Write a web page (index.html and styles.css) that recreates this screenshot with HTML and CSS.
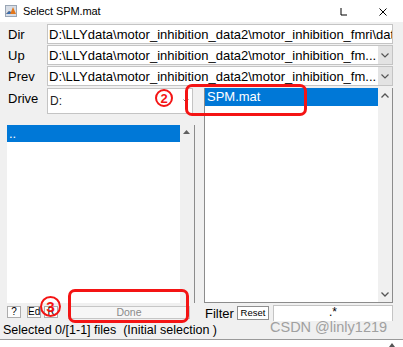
FILE: index.html
```html
<!DOCTYPE html>
<html>
<head>
<meta charset="utf-8">
<link rel="stylesheet" href="styles.css">
</head>
<body>
<div class="titlebar">
  <svg class="app-icon" viewBox="0 0 12 12" width="12" height="12">
    <rect x="0.5" y="0.5" width="11" height="11" fill="#d7dde6" stroke="#9aa6b5"/>
    <path d="M1 9 L4 6 L6 7 L8 2 L11 9 Z" fill="#e2761a"/>
    <path d="M1 9 L4 6 L6 7 L5 9 Z" fill="#3a6fb0"/>
  </svg>
  <span class="title">Select SPM.mat</span>
  <svg class="ctl-min" viewBox="0 0 8 8" width="8" height="8"><path d="M1 0 V7 H7" fill="none" stroke="#000" stroke-width="1"/></svg>
  <svg class="ctl-close" viewBox="0 0 8 8" width="8" height="8"><path d="M0.5 0.5 L7.5 7.5 M7.5 0.5 L0.5 7.5" fill="none" stroke="#000" stroke-width="1"/></svg>
</div>

<div class="main">
  <div class="paths">
    <div class="row">
      <span class="lbl">Dir</span>
      <div class="field"><span class="ftext">D:\LLYdata\motor_inhibition_data2\motor_inhibition_fmri\dat</span></div>
    </div>
    <div class="row">
      <span class="lbl">Up</span>
      <div class="field combo"><span class="ftext">D:\LLYdata\motor_inhibition_data2\motor_inhibition_fm...</span>
        <span class="drop"><svg viewBox="0 0 8 5" width="8" height="5"><path d="M0.5 0.5 L4 4 L7.5 0.5" fill="none" stroke="#555" stroke-width="1.2"/></svg></span>
      </div>
    </div>
    <div class="row">
      <span class="lbl">Prev</span>
      <div class="field combo"><span class="ftext">D:\LLYdata\motor_inhibition_data2\motor_inhibition_fm...</span>
        <span class="drop"><svg viewBox="0 0 8 5" width="8" height="5"><path d="M0.5 0.5 L4 4 L7.5 0.5" fill="none" stroke="#555" stroke-width="1.2"/></svg></span>
      </div>
    </div>
  </div>

  <div class="lower">
    <div class="left-col">
      <div class="drive-row">
        <span class="lbl">Drive</span>
        <div class="drive">
          <span class="dtext">D:</span>
          <svg class="darrow" viewBox="0 0 6 4" width="6" height="4"><path d="M0.5 0.5 L3 3 L5.5 0.5" fill="none" stroke="#777" stroke-width="1"/></svg>
        </div>
      </div>
      <div class="list left-list">
        <div class="items">
          <div class="item sel">..</div>
        </div>
        <div class="sbar">
          <svg class="up" viewBox="0 0 7 4" width="7" height="4"><path d="M0 4 L3.5 0 L7 4 Z" fill="#606060"/></svg>
        </div>
      </div>
      <div class="btn-row">
        <span class="btn b-q">?</span>
        <span class="btn b-ed">Ed</span>
        <span class="btn b-r">R</span>
        <span class="btn done">Done</span>
      </div>
    </div>

    <div class="right-col">
      <div class="list right-list">
        <div class="items">
          <div class="item sel tall">SPM.mat</div>
        </div>
        <div class="sbar">
          <svg class="up" viewBox="0 0 8 5" width="8" height="5"><path d="M0.5 4.5 L4 1 L7.5 4.5" fill="none" stroke="#555" stroke-width="1.3"/></svg>
          <svg class="down" viewBox="0 0 8 5" width="8" height="5"><path d="M0.5 0.5 L4 4 L7.5 0.5" fill="none" stroke="#555" stroke-width="1.3"/></svg>
        </div>
      </div>
      <div class="filter-row">
        <span class="flbl">Filter</span>
        <span class="btn reset">Reset</span>
        <div class="fedit">.*</div>
      </div>
    </div>
  </div>
</div>

<div class="status">Selected 0/[1-1] files  (Initial selection )</div>
<div class="footer">
  <svg class="fup" viewBox="0 0 6 4" width="6" height="4"><path d="M0 4 L3 0 L6 4 Z" fill="#555"/></svg>
</div>

<div class="watermark">CSDN @linly1219</div>
<div class="anno box1"></div>
<div class="anno box2"></div>
<div class="anno circ c2">2</div>
<div class="anno circ c3">3</div>
</body>
</html>
```

FILE: styles.css
```css
* { box-sizing: border-box; margin: 0; padding: 0; }
html, body { width: 403px; height: 347px; overflow: hidden; }
body {
  background: #f0f0f0;
  font-family: "Liberation Sans", Arial, sans-serif;
  color: #000;
  position: relative;
}

.titlebar {
  height: 22px;
  background: #fff;
  display: flex;
  align-items: center;
  padding-left: 5px;
}
.app-icon { margin-right: 6px; }
.title { font-size: 11px; flex: 1; letter-spacing: -0.1px; }
.ctl-min { margin-right: 31px; margin-top: 1px; }
.ctl-close { margin-right: 16px; margin-top: 1px; }

.main { padding: 2px 10px 0 7px; }

.paths { display: flex; flex-direction: column; gap: 1px; }
.row {
  display: grid;
  grid-template-columns: 40px 1fr;
  height: 20px;
  align-items: center;
}
.lbl { font-size: 13px; padding-left: 1px; }

.field {
  height: 20px;
  background: #fff;
  border: 1px solid #c4c4c4;
  display: flex;
  align-items: center;
  overflow: hidden;
}
.ftext {
  font-size: 13px;
  white-space: nowrap;
  padding-left: 1px;
  flex: 1;
  overflow: hidden;
}
.drop {
  width: 14px;
  height: 100%;
  background: #e3e3e3;
  display: flex;
  align-items: center;
  justify-content: center;
}

.lower { display: flex; gap: 9px; margin-top: 2px; }
.left-col { width: 188px; display: flex; flex-direction: column; }
.right-col { width: 189px; display: flex; flex-direction: column; }

.drive-row {
  display: grid;
  grid-template-columns: 40px 146px;
  height: 26px;
  align-items: start;
}
.drive-row .lbl { padding-top: 3px; }
.drive {
  height: 26px;
  background: #fff;
  border: 1px solid #c4c4c4;
  display: flex;
  align-items: center;
  padding: 0 3px 0 2px;
}
.dtext { font-size: 12px; flex: 1; color: #222; }

.list { display: flex; }
.left-list { height: 178px; margin-top: 11px; }
.right-list {
  height: 215px;
  border-left: 1px solid #8c8c8c;
  border-bottom: 1px solid #8c8c8c;
  border-right: 1px solid #8c8c8c;
}
.items { flex: 1; background: #fff; }
.item {
  height: 17px;
  font-size: 13px;
  line-height: 18px;
  padding-left: 2px;
  white-space: nowrap;
}
.item.tall { height: 18px; line-height: 18px; }
.sel { background: #0078d7; color: #fff; }

.sbar {
  width: 14px;
  background: #f0f0f0;
  display: flex;
  flex-direction: column;
  align-items: center;
  justify-content: space-between;
  padding: 5px 0 5px;
}
.left-list .sbar { width: 15px; border-right: 1px solid #8c8c8c; padding-top: 5px; }
.left-list .sbar .up { margin-right: 1px; }

.btn-row {
  display: flex;
  align-items: center;
  height: 14px;
  margin-top: 2px;
}
.btn {
  height: 12px;
  border: 1px solid #adadad;
  background: #fdfdfd;
  font-size: 10px;
  line-height: 10px;
  text-align: center;
  display: inline-block;
}
.b-q { width: 14px; }
.b-ed { width: 14px; margin-left: 6px; }
.b-r { width: 14px; margin-left: 3px; }
.done {
  width: 122px;
  height: 13px;
  margin-left: 10px;
  background: #f6f6f6;
  border-color: #c6c6c6;
  color: #8a8a8a;
  font-size: 10.5px;
  line-height: 11px;
}

.filter-row {
  display: flex;
  align-items: center;
  height: 16px;
  margin-top: 2px;
}
.flbl { font-size: 13px; width: 33px; padding-left: 1px; }
.reset {
  width: 32px;
  height: 14px;
  font-size: 9.5px;
  line-height: 12px;
  background: #fff;
  border-color: #8f8f8f;
}
.fedit {
  margin-left: 4px;
  width: 120px;
  height: 16px;
  background: #fff;
  border: 1px solid #c4c4c4;
  border-bottom: none;
  font-size: 12px;
  line-height: 12px;
  text-align: center;
}

.status {
  height: 16px;
  font-size: 12.5px;
  line-height: 16px;
  padding-left: 3px;
  white-space: pre;
  margin-top: 1px;
}
.footer {
  height: 11px;
  margin-top: 1px;
  background: #fff;
  border-top: 1px solid #9a9a9a;
  display: flex;
  justify-content: flex-end;
  align-items: flex-end;
  padding: 0 8px 3px 0;
}

.watermark {
  position: absolute;
  left: 270px;
  top: 319px;
  font-size: 14.5px;
  color: #a0a0a0;
  white-space: nowrap;
}

.anno { position: absolute; }
.box1, .box2 {
  border: 3px solid #f41414;
  border-radius: 7px;
}
.box1 { left: 185px; top: 84px; width: 122px; height: 32px; }
.box2 { left: 68px; top: 289px; width: 121px; height: 34px; }
.circ {
  border: 2px solid #f41414;
  border-radius: 50%;
  color: #f41414;
  font-weight: bold;
  display: flex;
  align-items: center;
  justify-content: center;
  background: transparent;
}
.c2 { left: 155px; top: 89px; width: 18px; height: 18px; font-size: 13px; }
.c3 { left: 40px; top: 296px; width: 21px; height: 21px; font-size: 15px; }
```
